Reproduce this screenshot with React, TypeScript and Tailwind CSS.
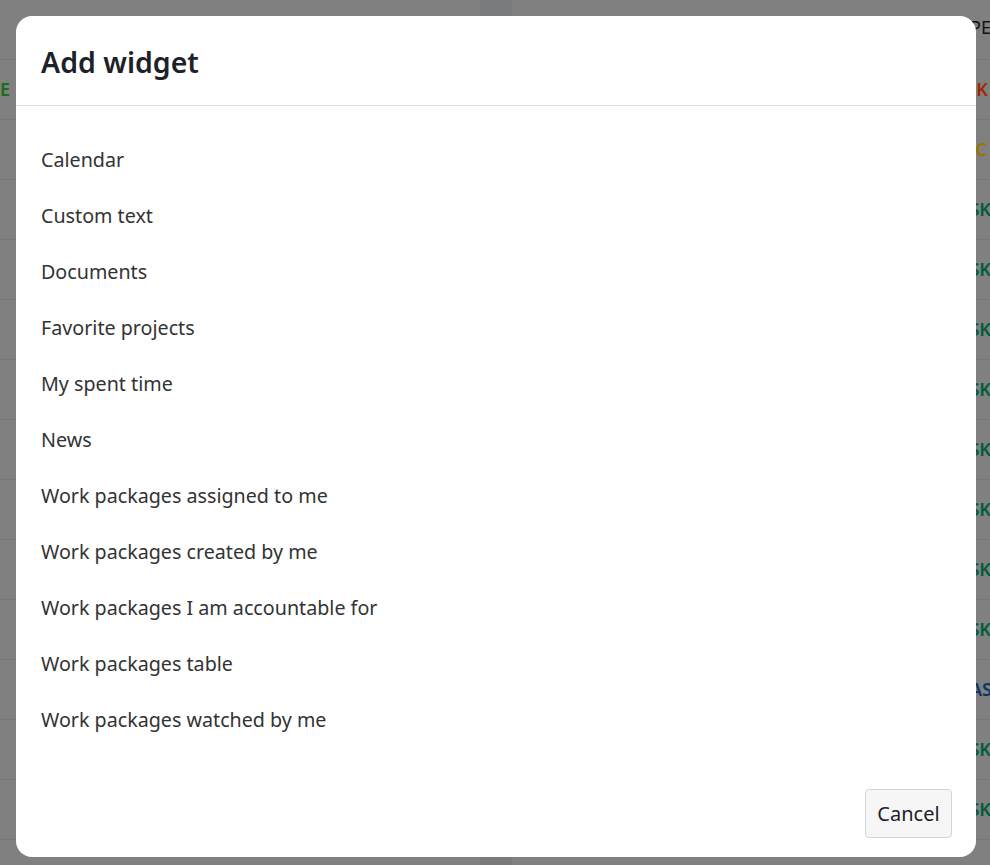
import React from 'react';

const widgets = [
  'Calendar',
  'Custom text',
  'Documents',
  'Favorite projects',
  'My spent time',
  'News',
  'Work packages assigned to me',
  'Work packages created by me',
  'Work packages I am accountable for',
  'Work packages table',
  'Work packages watched by me',
];

// right column labels behind the dimmed backdrop (already shaded)
const rightRows: { text: string; color: string; shift: string }[] = [
  { text: 'TYPE', color: 'text-[#111111] font-normal', shift: '-mr-[1px] mb-[4px]' },
  { text: 'RISK', color: 'text-[#a12800]', shift: 'mr-[2px]' },
  { text: 'EPIC', color: 'text-[#9a7500]', shift: 'mr-[3px]' },
  { text: 'TASK', color: 'text-[#005c3a]', shift: '-mr-[1px]' },
  { text: 'TASK', color: 'text-[#005c3a]', shift: '-mr-[1px]' },
  { text: 'TASK', color: 'text-[#005c3a]', shift: '-mr-[1px]' },
  { text: 'TASK', color: 'text-[#005c3a]', shift: '-mr-[1px]' },
  { text: 'TASK', color: 'text-[#005c3a]', shift: '-mr-[1px]' },
  { text: 'TASK', color: 'text-[#005c3a]', shift: '-mr-[1px]' },
  { text: 'TASK', color: 'text-[#005c3a]', shift: '-mr-[1px]' },
  { text: 'TASK', color: 'text-[#005c3a]', shift: '-mr-[1px]' },
  { text: 'PHASE', color: 'text-[#0b3766]', shift: '-mr-[12px]' },
  { text: 'TASK', color: 'text-[#005c3a]', shift: '-mr-[1px]' },
  { text: 'TASK', color: 'text-[#005c3a]', shift: '-mr-[1px]' },
  { text: '', color: '', shift: '' },
];

export default function App() {
  return (
    <div className="relative w-[990px] h-[865px] overflow-hidden bg-[#808080] font-['Noto_Sans','Open_Sans',sans-serif]">
      {/* page behind the modal */}
      <div className="flex h-full">
        <div className="w-[480px] flex flex-col">
          {rightRows.map((_, i) => (
            <div key={i} className="h-[60px] shrink-0 border-b border-[#777777] flex items-center text-[18px] font-semibold">
              {i === 1 && <span className="text-[#1c6e1c]">E</span>}
              {i === 14 && <span className="ml-[110px] mt-[44px] text-[#222] font-normal">Lorem ipsum dolor</span>}
            </div>
          ))}
        </div>
        <div className="w-[32px] bg-[#7a7b7c]" />
        <div className="flex-1 flex flex-col">
          {rightRows.map((r, i) => (
            <div key={i} className="h-[60px] shrink-0 border-b border-[#777777] flex items-center justify-end text-[18px] font-semibold">
              <span className={`${r.color} ${r.shift}`}>{r.text}</span>
            </div>
          ))}
        </div>
      </div>

      {/* modal */}
      <div className="absolute left-[16px] top-[16px] w-[960px] h-[841px] bg-white rounded-[16px] flex flex-col">
        <div className="h-[90px] shrink-0 border-b border-[#dedede] flex items-center px-[25px]">
          <h2 className="text-[28.5px] font-semibold text-[#1d2128] leading-none mt-[4px]">Add widget</h2>
        </div>
        <ul className="pt-[26px] flex flex-col">
          {widgets.map(w => (
            <li key={w} className="h-[56px] flex items-center px-[25px] text-[19.7px] text-[#333333]">
              {w}
            </li>
          ))}
        </ul>
        <div className="mt-auto flex justify-end px-[24px] pb-[19px]">
          <button className="w-[87px] h-[49px] bg-[#f6f6f7] border border-[#d2d5dc] rounded-[4px] text-[20px] text-[#1d2128]">
            Cancel
          </button>
        </div>
      </div>
    </div>
  );
}
